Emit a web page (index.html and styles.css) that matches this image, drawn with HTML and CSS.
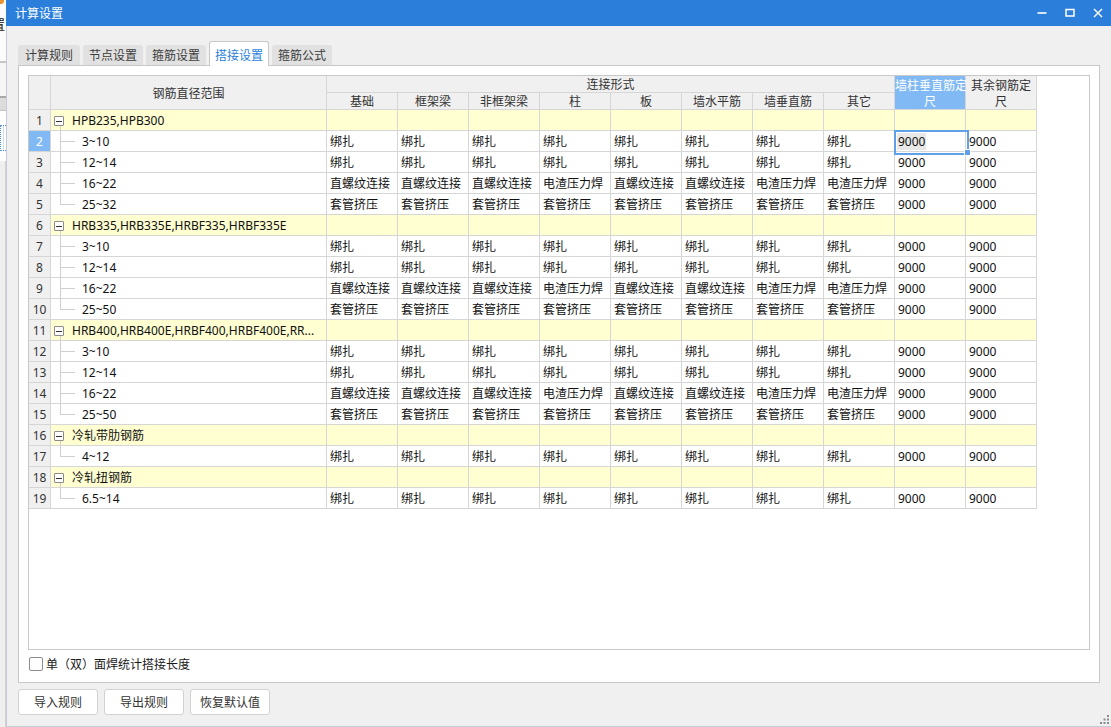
FILE: index.html
```html
<!DOCTYPE html>
<html lang="zh">
<head>
<meta charset="utf-8">
<title>计算设置</title>
<link rel="stylesheet" href="styles.css">
</head>
<body>
<div class="strip">
  <div class="s1"><span class="dot"></span></div>
  <div class="s2"><span class="frag">置</span></div>
  <div class="s3"></div>
  <div class="s4"></div>
  <div class="s5"><div class="dots"></div></div>
  <div class="s6"></div>
</div>
<div class="dialog">
  <div class="titlebar">
    <span class="title">计算设置</span>
    <div class="ctrls">
      <div class="ctrl"><svg width="10" height="10" viewBox="0 0 10 10"><rect x="0.5" y="4.2" width="9" height="1.6" fill="#fff"/></svg></div>
      <div class="ctrl"><svg width="10" height="10" viewBox="0 0 10 10"><rect x="1" y="1.5" width="8" height="6.5" fill="none" stroke="#fff" stroke-width="1.5"/></svg></div>
      <div class="ctrl"><svg width="10" height="10" viewBox="0 0 10 10"><path d="M1 1L9 9M9 1L1 9" stroke="#fff" stroke-width="1.4"/></svg></div>
    </div>
  </div>
  <div class="body">
    <div class="tabs">
      <div class="tab first">计算规则</div>
      <div class="tab">节点设置</div>
      <div class="tab">箍筋设置</div>
      <div class="tab active">搭接设置</div>
      <div class="tab">箍筋公式</div>
    </div>
    <div class="panel">
      <div class="frame">
        <div class="grid">
          <div class="c h n hn"></div>
          <div class="c h hr">钢筋直径范围</div>
          <div class="c h hconn">连接形式</div>
          <div class="c h h2 hsel">墙柱垂直筋定<br>尺</div>
          <div class="c h h2">其余钢筋定<br>尺</div>
          <div class="c h">基础</div>
          <div class="c h">框架梁</div>
          <div class="c h">非框架梁</div>
          <div class="c h">柱</div>
          <div class="c h">板</div>
          <div class="c h">墙水平筋</div>
          <div class="c h">墙垂直筋</div>
          <div class="c h">其它</div>

          <div class="row grp"><div class="c n">1</div><div class="c r gr"><span class="tog"></span>HPB235,HPB300</div><div class="c"></div><div class="c"></div><div class="c"></div><div class="c"></div><div class="c"></div><div class="c"></div><div class="c"></div><div class="c"></div><div class="c"></div><div class="c"></div></div>
          <div class="row"><div class="c n nsel">2</div><div class="c r ch">3~10</div><div class="c t">绑扎</div><div class="c t">绑扎</div><div class="c t">绑扎</div><div class="c t">绑扎</div><div class="c t">绑扎</div><div class="c t">绑扎</div><div class="c t">绑扎</div><div class="c t">绑扎</div><div class="c t cur"><span class="seltext">9000</span></div><div class="c t">9000</div></div>
          <div class="row"><div class="c n">3</div><div class="c r ch">12~14</div><div class="c t">绑扎</div><div class="c t">绑扎</div><div class="c t">绑扎</div><div class="c t">绑扎</div><div class="c t">绑扎</div><div class="c t">绑扎</div><div class="c t">绑扎</div><div class="c t">绑扎</div><div class="c t">9000</div><div class="c t">9000</div></div>
          <div class="row"><div class="c n">4</div><div class="c r ch">16~22</div><div class="c t">直螺纹连接</div><div class="c t">直螺纹连接</div><div class="c t">直螺纹连接</div><div class="c t">电渣压力焊</div><div class="c t">直螺纹连接</div><div class="c t">直螺纹连接</div><div class="c t">电渣压力焊</div><div class="c t">电渣压力焊</div><div class="c t">9000</div><div class="c t">9000</div></div>
          <div class="row"><div class="c n">5</div><div class="c r ch last">25~32</div><div class="c t">套管挤压</div><div class="c t">套管挤压</div><div class="c t">套管挤压</div><div class="c t">套管挤压</div><div class="c t">套管挤压</div><div class="c t">套管挤压</div><div class="c t">套管挤压</div><div class="c t">套管挤压</div><div class="c t">9000</div><div class="c t">9000</div></div>

          <div class="row grp"><div class="c n">6</div><div class="c r gr"><span class="tog"></span>HRB335,HRB335E,HRBF335,HRBF335E</div><div class="c"></div><div class="c"></div><div class="c"></div><div class="c"></div><div class="c"></div><div class="c"></div><div class="c"></div><div class="c"></div><div class="c"></div><div class="c"></div></div>
          <div class="row"><div class="c n">7</div><div class="c r ch">3~10</div><div class="c t">绑扎</div><div class="c t">绑扎</div><div class="c t">绑扎</div><div class="c t">绑扎</div><div class="c t">绑扎</div><div class="c t">绑扎</div><div class="c t">绑扎</div><div class="c t">绑扎</div><div class="c t">9000</div><div class="c t">9000</div></div>
          <div class="row"><div class="c n">8</div><div class="c r ch">12~14</div><div class="c t">绑扎</div><div class="c t">绑扎</div><div class="c t">绑扎</div><div class="c t">绑扎</div><div class="c t">绑扎</div><div class="c t">绑扎</div><div class="c t">绑扎</div><div class="c t">绑扎</div><div class="c t">9000</div><div class="c t">9000</div></div>
          <div class="row"><div class="c n">9</div><div class="c r ch">16~22</div><div class="c t">直螺纹连接</div><div class="c t">直螺纹连接</div><div class="c t">直螺纹连接</div><div class="c t">电渣压力焊</div><div class="c t">直螺纹连接</div><div class="c t">直螺纹连接</div><div class="c t">电渣压力焊</div><div class="c t">电渣压力焊</div><div class="c t">9000</div><div class="c t">9000</div></div>
          <div class="row"><div class="c n">10</div><div class="c r ch last">25~50</div><div class="c t">套管挤压</div><div class="c t">套管挤压</div><div class="c t">套管挤压</div><div class="c t">套管挤压</div><div class="c t">套管挤压</div><div class="c t">套管挤压</div><div class="c t">套管挤压</div><div class="c t">套管挤压</div><div class="c t">9000</div><div class="c t">9000</div></div>

          <div class="row grp"><div class="c n">11</div><div class="c r gr"><span class="tog"></span>HRB400,HRB400E,HRBF400,HRBF400E,RR...</div><div class="c"></div><div class="c"></div><div class="c"></div><div class="c"></div><div class="c"></div><div class="c"></div><div class="c"></div><div class="c"></div><div class="c"></div><div class="c"></div></div>
          <div class="row"><div class="c n">12</div><div class="c r ch">3~10</div><div class="c t">绑扎</div><div class="c t">绑扎</div><div class="c t">绑扎</div><div class="c t">绑扎</div><div class="c t">绑扎</div><div class="c t">绑扎</div><div class="c t">绑扎</div><div class="c t">绑扎</div><div class="c t">9000</div><div class="c t">9000</div></div>
          <div class="row"><div class="c n">13</div><div class="c r ch">12~14</div><div class="c t">绑扎</div><div class="c t">绑扎</div><div class="c t">绑扎</div><div class="c t">绑扎</div><div class="c t">绑扎</div><div class="c t">绑扎</div><div class="c t">绑扎</div><div class="c t">绑扎</div><div class="c t">9000</div><div class="c t">9000</div></div>
          <div class="row"><div class="c n">14</div><div class="c r ch">16~22</div><div class="c t">直螺纹连接</div><div class="c t">直螺纹连接</div><div class="c t">直螺纹连接</div><div class="c t">电渣压力焊</div><div class="c t">直螺纹连接</div><div class="c t">直螺纹连接</div><div class="c t">电渣压力焊</div><div class="c t">电渣压力焊</div><div class="c t">9000</div><div class="c t">9000</div></div>
          <div class="row"><div class="c n">15</div><div class="c r ch last">25~50</div><div class="c t">套管挤压</div><div class="c t">套管挤压</div><div class="c t">套管挤压</div><div class="c t">套管挤压</div><div class="c t">套管挤压</div><div class="c t">套管挤压</div><div class="c t">套管挤压</div><div class="c t">套管挤压</div><div class="c t">9000</div><div class="c t">9000</div></div>

          <div class="row grp"><div class="c n">16</div><div class="c r gr"><span class="tog"></span>冷轧带肋钢筋</div><div class="c"></div><div class="c"></div><div class="c"></div><div class="c"></div><div class="c"></div><div class="c"></div><div class="c"></div><div class="c"></div><div class="c"></div><div class="c"></div></div>
          <div class="row"><div class="c n">17</div><div class="c r ch last">4~12</div><div class="c t">绑扎</div><div class="c t">绑扎</div><div class="c t">绑扎</div><div class="c t">绑扎</div><div class="c t">绑扎</div><div class="c t">绑扎</div><div class="c t">绑扎</div><div class="c t">绑扎</div><div class="c t">9000</div><div class="c t">9000</div></div>

          <div class="row grp"><div class="c n">18</div><div class="c r gr"><span class="tog"></span>冷轧扭钢筋</div><div class="c"></div><div class="c"></div><div class="c"></div><div class="c"></div><div class="c"></div><div class="c"></div><div class="c"></div><div class="c"></div><div class="c"></div><div class="c"></div></div>
          <div class="row"><div class="c n">19</div><div class="c r ch last">6.5~14</div><div class="c t">绑扎</div><div class="c t">绑扎</div><div class="c t">绑扎</div><div class="c t">绑扎</div><div class="c t">绑扎</div><div class="c t">绑扎</div><div class="c t">绑扎</div><div class="c t">绑扎</div><div class="c t">9000</div><div class="c t">9000</div></div>
        </div>
      </div>
      <label class="check"><span class="box"></span>单（双）面焊统计搭接长度</label>
    </div>
    <div class="buttons">
      <div class="btn">导入规则</div>
      <div class="btn">导出规则</div>
      <div class="btn">恢复默认值</div>
    </div>
    <svg class="grip" width="9" height="9" viewBox="0 0 9 9"><g fill="#8a8a8a"><rect x="7" y="0" width="2" height="2"/><rect x="3.5" y="3.5" width="2" height="2"/><rect x="7" y="3.5" width="2" height="2"/><rect x="0" y="7" width="2" height="2"/><rect x="3.5" y="7" width="2" height="2"/><rect x="7" y="7" width="2" height="2"/></g></svg>
  </div>
</div>
</body>
</html>
```
FILE: styles.css
```css
* { box-sizing: border-box; }
html, body { margin: 0; padding: 0; }
body {
  width: 1111px;
  height: 727px;
  overflow: hidden;
  display: flex;
  font-family: "Noto Sans", "Noto Sans CJK SC", sans-serif;
  font-size: 12px;
  color: #1a1a1a;
  background: #fff;
}

/* background application fragment at the far left */
.strip { width: 6px; flex: none; display: flex; flex-direction: column; overflow: hidden; background: #fff; }
.s1 { height: 8px; }
.dot { display: block; width: 4px; height: 4px; background: #e8912f; border-radius: 0 0 3px 0; }
.s2 { height: 53px; background: #fbfbfb; overflow: hidden; }
.frag { display: block; margin: 9px 0 0 -8px; font-size: 13px; line-height: 14px; color: #111; }
.s3 { height: 2px; background: #c6c6c6; }
.s4 { height: 48px; background: #f6f6f6; border-bottom: 1px solid #c4c4c4; box-shadow: inset 0 -12px 0 #dcdcdc, inset 0 -14px 0 #a8a8a8; }
.s5 { height: 50px; background: #fff; padding-top: 14px; }
.dots { height: 26px; border: 1px dotted #4a8fd8; border-right: none; background: repeating-linear-gradient(90deg, transparent 0 2px, #cfe0f5 2px 3px); }
.s6 { flex: 1; background: #efefef; border-right: 1px solid #d2d2d2; }

/* dialog */
.dialog { flex: 1; min-width: 0; display: flex; flex-direction: column; }
.titlebar {
  height: 26px; flex: none;
  background: #2b7fdb; color: #fff;
  display: flex; align-items: center;
  padding-left: 9px;
}
.title { flex: 1; font-size: 12px; }
.ctrls { display: flex; margin-right: -1px; }
.ctrl { width: 28px; height: 26px; display: flex; align-items: center; justify-content: center; }

.body {
  flex: 1;
  position: relative;
  background: #f0f0f0;
  border-left: 1px solid #c3cbd6;
  border-bottom: 1px solid #c3cbd6;
  padding: 15px 11px 0 11px;
}

.tabs { display: flex; align-items: flex-end; height: 25px; position: relative; z-index: 1; }
.tab {
  width: 60px; height: 20px;
  margin: 0 3px 1px 0;
  background: #e1e1e1;
  border-radius: 3px 3px 0 0;
  display: flex; align-items: center; justify-content: center;
  color: #3c3c3c;
}
.tab.first { width: 62px; }
.tab.active {
  height: 25px; margin-bottom: 0;
  background: #fff;
  border: 1px solid #c8c8c8; border-bottom: none;
  color: #2b7fdb;
  padding-top: 2px;
}

.panel {
  margin-top: -1px;
  height: 618px;
  background: #fff;
  border: 1px solid #c8c8c8;
  padding: 9px 9px 0 9px;
}
.frame { height: 575px; border: 1px solid #c8c8c8; background: #fff; }

.grid {
  display: grid;
  grid-template-columns: 22px 276px repeat(10, 71px);
  grid-template-rows: 17px 17px repeat(19, 21px);
}
.row { display: contents; }
.c {
  border-right: 1px solid #d6d6d6;
  border-bottom: 1px solid #d6d6d6;
  white-space: nowrap;
  overflow: hidden;
  line-height: 22px;
}
.h {
  background: #f0f0f0;
  color: #333;
  text-align: center;
  line-height: 18px;
  overflow: visible;
}
.hn, .hr { grid-row: span 2; display: flex; align-items: center; justify-content: center; padding-top: 2px; }
.hconn { grid-column: span 8; }
.h2 { grid-row: span 2; padding-top: 2px; line-height: 16px; }
.hsel { background: #80b9f3; color: #fff; }
.n { background: #f0f0f0; color: #333; text-align: center; }
.nsel { background: #80b9f3; color: #fff; }
.grp > .c:not(.n) { background: #ffffd2; }
.t { padding-left: 3px; color: #111; }

.r { position: relative; color: #111; }
.gr { padding: 2px 0 0 3px; display: flex; align-items: center; line-height: 18px; }
.tog {
  width: 10px; height: 10px; flex: none;
  margin-right: 8px;
  border: 1px solid #8c8c8c; border-radius: 1px;
  background: #fff;
  display: flex; align-items: center; justify-content: center;
}
.tog::before { content: ""; width: 6px; height: 1px; background: #333; }
.gr::after {
  content: ""; position: absolute;
  left: 9px; top: 16px; bottom: -1px;
  border-left: 1px solid #d0d0d0;
}
.ch { padding-left: 31px; }
.ch::before {
  content: ""; position: absolute;
  left: 9px; top: 0; bottom: -1px;
  border-left: 1px solid #d0d0d0;
}
.ch.last::before { bottom: 10px; }
.ch::after {
  content: ""; position: absolute;
  left: 9px; top: 10px; width: 15px;
  border-top: 1px solid #d0d0d0;
}

.cur { position: relative; overflow: visible; padding-left: 2px; }
.cur::before {
  content: ""; position: absolute;
  left: -1px; top: -1px; width: 71px; height: 21px;
  border: 2px solid #5fa0e8;
}
.cur::after {
  content: ""; position: absolute;
  left: 69px; top: 18px; width: 5px; height: 5px;
  background: #5fa0e8; border: 1px solid #fff;
}
.seltext { background: #e8e8e8; padding: 0 1px; }

.check {
  display: flex; align-items: center;
  height: 14px; margin-top: 7px; padding-left: 1px;
  color: #1a1a1a;
}
.box {
  width: 14px; height: 14px; flex: none;
  border: 1px solid #8a8a8a; border-radius: 2px;
  background: #fff; margin-right: 3px;
}

.buttons { display: flex; gap: 6px; margin-top: 6px; }
.btn {
  width: 80px; height: 26px;
  background: #fff;
  border: 1px solid #d2d2d2; border-radius: 3px;
  display: flex; align-items: center; justify-content: center;
  color: #333;
}
.grip { position: absolute; right: 2px; bottom: 2px; }
```
